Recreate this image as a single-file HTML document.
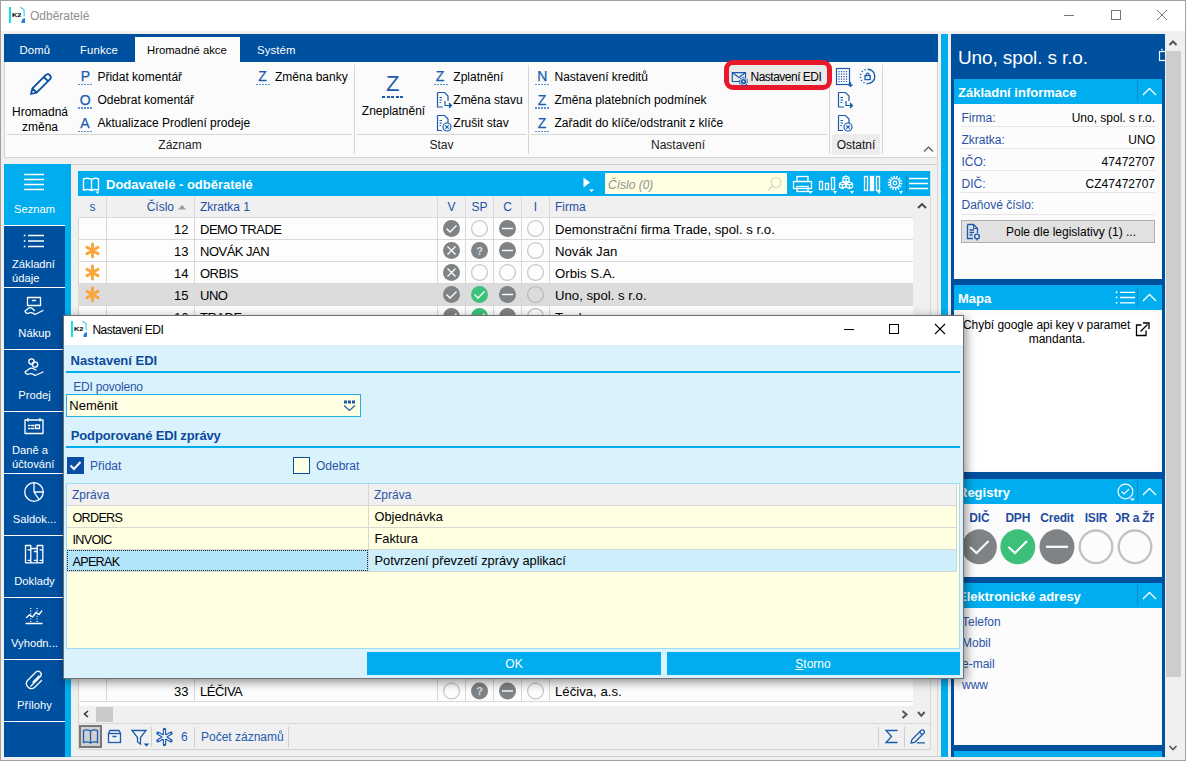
<!DOCTYPE html>
<html><head><meta charset="utf-8">
<style>
*{box-sizing:border-box;margin:0;padding:0}
html,body{width:1186px;height:761px;overflow:hidden}
body{position:relative;background:#f0f0f0;font-family:"Liberation Sans",sans-serif;font-size:12px;color:#000}
.a{position:absolute}
.t{position:absolute;white-space:nowrap;line-height:1}
.db{background:#0050a0}
.cy{background:#00aeef}
</style></head><body>
<!-- window frame -->
<div class="a" style="left:0;top:0;width:1186px;height:761px;border:1px solid #a0a0a0;z-index:50;pointer-events:none"></div>
<!-- title bar -->
<div class="a" style="left:1px;top:1px;width:1184px;height:30px;background:#fff"></div>
<!-- K2 logo -->
<svg class="a" style="left:0;top:0" width="120" height="31">
 <g transform="translate(0,0)">
 <rect x="9" y="7" width="2" height="16" fill="#0fe0f0"/>
 <text x="12" y="17" font-family="Liberation Sans" font-weight="bold" font-size="5.8" fill="#000" textLength="9.5" lengthAdjust="spacingAndGlyphs">K2</text>
 <path d="M20.3,7.3 L24,9.5 L24.2,16.5" stroke="#3cc8e8" stroke-width="1.1" fill="none"/>
 <path d="M21.5,23 L25,23 L25,18 Q22,18.5 21.5,21 Z" fill="#2a7ad8"/>
 </g>
</svg>
<div class="t" style="left:30px;top:9.5px;font-size:12px;color:#8f8f8f">Odběratelé</div>
<svg class="a" style="left:1050px;top:0" width="136" height="31">
 <path d="M14,15.5 H24" stroke="#777" stroke-width="1"/>
 <rect x="61.5" y="10.5" width="9" height="9" stroke="#777" stroke-width="1" fill="none"/>
 <path d="M107,10 L117,20 M117,10 L107,20" stroke="#777" stroke-width="1"/>
</svg>


<!-- ribbon tabs -->
<div class="a db" style="left:4px;top:34px;width:934px;height:28px"></div>
<div class="a" style="left:4px;top:62px;width:934px;height:96px;background:#fbfbfb;border:1px solid #d4d4d4;border-top:none"></div>

<div class="a" style="left:135px;top:37px;width:105px;height:25px;background:#fbfbfb"></div>
<div class="t" style="left:19.5px;top:44.7px;font-size:11.3px;color:#fff;letter-spacing:0.15px">Domů</div>
<div class="t" style="left:80px;top:44.7px;font-size:11.3px;color:#fff;letter-spacing:0.15px">Funkce</div>
<div class="t" style="left:257px;top:44.7px;font-size:11.3px;color:#fff;letter-spacing:0.15px">Systém</div>
<div class="t" style="left:147px;top:44.7px;font-size:11.3px;color:#000;letter-spacing:0px">Hromadné akce</div>
<svg class="a" style="left:0;top:62px" width="938" height="96">
<g transform="translate(0,-62)" fill="none" stroke="#0a4ea3" stroke-width="1.8" stroke-linejoin="round">
 <path d="M31,94 L32.4,88.4 L45.9,74.9 A3,3 0 0 1 50.1,79.1 L36.6,92.6 Z M32.4,88.4 L36.6,92.6 M43.8,77 L48,81.2"/>
</g>
<g transform="translate(0,-62)">
 <line x1="7" y1="134.5" x2="352" y2="134.5" stroke="#d7d7d7"/>
 <line x1="357" y1="134.5" x2="526" y2="134.5" stroke="#d7d7d7"/>
 <line x1="531" y1="134.5" x2="827" y2="134.5" stroke="#d7d7d7"/>
 <line x1="354.5" y1="65" x2="354.5" y2="154" stroke="#d7d7d7"/>
 <line x1="528.5" y1="65" x2="528.5" y2="154" stroke="#d7d7d7"/>
 <line x1="829.5" y1="65" x2="829.5" y2="154" stroke="#d7d7d7"/>
 <line x1="882.5" y1="65" x2="882.5" y2="154" stroke="#d7d7d7"/>
 <rect x="832" y="134" width="48" height="21" fill="#ececec"/>
 <path d="M924,151.5 L928.5,147 L933,151.5" stroke="#555" stroke-width="1.1" fill="none"/>
</g>
</svg>
<div class="t" style="left:-60.0px;top:105.74px;width:200px;text-align:center;font-size:12px;color:#000;">Hromadná</div>
<div class="t" style="left:-60.0px;top:121px;width:200px;text-align:center;font-size:12px;color:#000;">změna</div>
<div class="t" style="left:80.0px;top:138.64px;width:200px;text-align:center;font-size:12px;color:#222;">Záznam</div>
<div class="t" style="left:341.5px;top:138.64px;width:200px;text-align:center;font-size:12px;color:#222;">Stav</div>
<div class="t" style="left:578.0px;top:138.64px;width:200px;text-align:center;font-size:12px;color:#222;">Nastavení</div>
<div class="t" style="left:756.0px;top:138.64px;width:200px;text-align:center;font-size:12px;color:#111;">Ostatní</div>
<div class="t" style="left:293.5px;top:105.44px;width:200px;text-align:center;font-size:12px;color:#000;">Zneplatnění</div>
<div class="t" style="left:386px;top:73px;font-size:22px;color:#1a5bb0">Z</div>
<div class="a" style="left:382px;top:96px;width:23px;height:2px;background:repeating-linear-gradient(90deg,#1a5bb0 0 3px,transparent 3px 4.6px)"></div>
<div class="t" style="left:80.7px;top:69.45px;font-size:14px;color:#1a5bb0;-webkit-text-stroke:0.25px #1a5bb0">P</div>
<div class="a" style="left:78px;top:84.0px;width:15px;height:1.4px;background:repeating-linear-gradient(90deg,#5b8fd2 0 2px,transparent 2px 3px)"></div>
<div class="t" style="left:97.4px;top:71.1px;font-size:12px;color:#000;">Přidat komentář</div>
<div class="t" style="left:79.7px;top:92.75px;font-size:14px;color:#1a5bb0;-webkit-text-stroke:0.25px #1a5bb0">O</div>
<div class="a" style="left:78px;top:107.3px;width:15px;height:1.4px;background:repeating-linear-gradient(90deg,#5b8fd2 0 2px,transparent 2px 3px)"></div>
<div class="t" style="left:97.4px;top:94.2px;font-size:12px;color:#000;">Odebrat komentář</div>
<div class="t" style="left:80.2px;top:115.95px;font-size:14px;color:#1a5bb0;-webkit-text-stroke:0.25px #1a5bb0">A</div>
<div class="a" style="left:78px;top:130.5px;width:15px;height:1.4px;background:repeating-linear-gradient(90deg,#5b8fd2 0 2px,transparent 2px 3px)"></div>
<div class="t" style="left:97.4px;top:117.4px;font-size:12px;color:#000;">Aktualizace Prodlení prodeje</div>
<div class="t" style="left:258.2px;top:69.45px;font-size:14px;color:#1a5bb0;-webkit-text-stroke:0.25px #1a5bb0">Z</div>
<div class="a" style="left:256px;top:84.0px;width:15px;height:1.4px;background:repeating-linear-gradient(90deg,#5b8fd2 0 2px,transparent 2px 3px)"></div>
<div class="t" style="left:275px;top:71.1px;font-size:12px;color:#000;">Změna banky</div>
<div class="t" style="left:435.7px;top:69.45px;font-size:14px;color:#1a5bb0;-webkit-text-stroke:0.25px #1a5bb0">Z</div>
<div class="a" style="left:434px;top:84.0px;width:15px;height:1.4px;background:repeating-linear-gradient(90deg,#5b8fd2 0 2px,transparent 2px 3px)"></div>
<div class="t" style="left:453.3px;top:71.1px;font-size:12px;color:#000;">Zplatnění</div>
<div class="t" style="left:453.3px;top:94.2px;font-size:12px;color:#000;">Změna stavu</div>
<div class="t" style="left:453.3px;top:117.4px;font-size:12px;color:#000;">Zrušit stav</div>
<div class="t" style="left:537.2px;top:69.45px;font-size:14px;color:#1a5bb0;-webkit-text-stroke:0.25px #1a5bb0">N</div>
<div class="a" style="left:535px;top:84.0px;width:15px;height:1.4px;background:repeating-linear-gradient(90deg,#5b8fd2 0 2px,transparent 2px 3px)"></div>
<div class="t" style="left:554.5px;top:71.1px;font-size:12px;color:#000;">Nastavení kreditů</div>
<div class="t" style="left:537.7px;top:92.75px;font-size:14px;color:#1a5bb0;-webkit-text-stroke:0.25px #1a5bb0">Z</div>
<div class="a" style="left:535px;top:107.3px;width:15px;height:1.4px;background:repeating-linear-gradient(90deg,#5b8fd2 0 2px,transparent 2px 3px)"></div>
<div class="t" style="left:554.5px;top:94.2px;font-size:12px;color:#000;">Změna platebních podmínek</div>
<div class="t" style="left:537.7px;top:115.95px;font-size:14px;color:#1a5bb0;-webkit-text-stroke:0.25px #1a5bb0">Z</div>
<div class="a" style="left:535px;top:130.5px;width:15px;height:1.4px;background:repeating-linear-gradient(90deg,#5b8fd2 0 2px,transparent 2px 3px)"></div>
<div class="t" style="left:554.5px;top:117.4px;font-size:12px;color:#000;">Zařadit do klíče/odstranit z klíče</div>
<div class="a" style="left:729px;top:65px;width:98px;height:20px;background:#e9e9e9"></div>
<div class="t" style="left:750.5px;top:70.9px;font-size:12px;color:#000;letter-spacing:-0.5px">Nastavení EDI</div>
<div class="a" style="left:724px;top:60px;width:108px;height:30px;border:5px solid #e8192a;border-radius:9px"></div>
<svg class="a" style="left:0;top:0" width="938" height="160">
<g fill="none" stroke="#1a5bb0" stroke-width="1.2">
 <!-- doc arrow (Zmena stavu) -->
 <path d="M437.5,92.5 H444.5 L448,96 V101 M437.5,92.5 V107 H443"/>
 <path d="M439.5,97.5 H442 M439.5,100 H442 M439.5,102.5 H441"/>
 <path d="M445,101 V105.5 H450"/><path d="M449,103 L451.5,105.5 L449,108" fill="#1a5bb0"/>
 <!-- doc X (Zrusit stav) -->
 <path d="M437.5,115.5 H444.5 L448,119 V123 M437.5,115.5 V130.5 H442"/>
 <path d="M439.5,120.5 H442 M439.5,123 H442 M439.5,125.5 H441"/>
 <circle cx="447" cy="127" r="4"/><path d="M445.3,125.3 L448.7,128.7 M448.7,125.3 L445.3,128.7"/>
 <!-- envelope -->
 <path d="M740,81.5 H732.3 V72.6 H745.5 V77.5"/><path d="M732.3,72.6 L738.9,77.4 L745.5,72.6"/>
 <!-- building -->
 <rect x="836.5" y="68.5" width="13" height="16"/>
 <path d="M839,71 V82 M841.5,71 V82 M844,71 V82 M846.5,71 V82" stroke-dasharray="1.2 1.3"/>
 <path d="M850.5,82 V86 M848.5,84.5 L850.5,86.5 L852.5,84.5" />
 <!-- lock circle -->
 <path d="M867.6,69.2 A7.2,7.2 0 1 1 867.6,83.6" stroke-width="1.4"/>
 <path d="M867.6,83.6 A7.2,7.2 0 0 1 867.6,69.2" stroke-width="1.5" stroke-dasharray="1.2 2"/>
 <rect x="865" y="75.6" width="5.2" height="4" stroke-width="1.3"/><path d="M866.2,75.6 V74.6 A1.4,1.4 0 0 1 869,74.6 V75.6" stroke-width="1.2"/>
 <!-- doc arrow 2 -->
 <path d="M838.5,92.5 H845.5 L849,96 V101 M838.5,92.5 V107 H844"/>
 <path d="M840.5,97.5 H843 M840.5,100 H843 M840.5,102.5 H842"/>
 <path d="M846,101 V105.5 H851"/><path d="M850,103 L852.5,105.5 L850,108" fill="#1a5bb0"/>
 <!-- doc x 2 -->
 <path d="M838.5,115.5 H845.5 L849,119 V123 M838.5,115.5 V130.5 H843"/>
 <path d="M840.5,120.5 H843 M840.5,123 H843 M840.5,125.5 H842"/>
 <circle cx="848" cy="127" r="4"/><path d="M846.3,125.3 L849.7,128.7 M849.7,125.3 L846.3,128.7"/>
</g>
<circle cx="743.5" cy="81.5" r="3.9" fill="none" stroke="#1a5bb0" stroke-width="1.6" stroke-dasharray="1.3 1.1"/><circle cx="743.5" cy="81.5" r="2.6" fill="#1a5bb0"/><circle cx="743.5" cy="81.5" r="1" fill="#e9e9e9"/>
</svg>

<!-- sidebar -->
<div class="a cy" style="left:4px;top:164px;width:67px;height:593px"></div>
<div class="a db" style="left:4px;top:226px;width:61px;height:531px"></div>

<svg class="a" style="left:0;top:160px" width="72" height="600"><g transform="translate(0,-160)"><line x1="4" y1="225.5" x2="65" y2="225.5" stroke="#fff" stroke-width="1.2"/><line x1="4" y1="287.5" x2="65" y2="287.5" stroke="#fff" stroke-width="1.2"/><line x1="4" y1="349.5" x2="65" y2="349.5" stroke="#fff" stroke-width="1.2"/><line x1="4" y1="411.5" x2="65" y2="411.5" stroke="#fff" stroke-width="1.2"/><line x1="4" y1="473.5" x2="65" y2="473.5" stroke="#fff" stroke-width="1.2"/><line x1="4" y1="535.5" x2="65" y2="535.5" stroke="#fff" stroke-width="1.2"/><line x1="4" y1="597.5" x2="65" y2="597.5" stroke="#fff" stroke-width="1.2"/><line x1="4" y1="659.5" x2="65" y2="659.5" stroke="#fff" stroke-width="1.2"/><line x1="4" y1="721.5" x2="65" y2="721.5" stroke="#fff" stroke-width="1.2"/><g fill="none" stroke="#fff" stroke-width="1.3"><path d="M24,174.5 H44 M24,179.5 H44 M24,184.5 H44 M24,189.5 H44"/><path d="M28,235.5 H44 M28,241 H44 M28,246.5 H44"/></g><g fill="#fff"><rect x="23.8" y="234.7" width="1.6" height="1.6"/><rect x="23.8" y="240.2" width="1.6" height="1.6"/><rect x="23.8" y="245.7" width="1.6" height="1.6"/></g><g fill="none" stroke="#fff" stroke-width="1.3" stroke-linejoin="round" stroke-linecap="round"><rect x="27.5" y="297.5" width="13" height="8"/><path d="M32.5,300.5 H35.5"/><path d="M34.5,310.5 Q31,306.5 29,308 L25,311 Q26,314.5 29,313 Q32,312 35,314.5 L43,310.5"/><circle cx="31.5" cy="361.5" r="2.7"/><circle cx="35" cy="364.5" r="2.7"/><path d="M36,370 Q31,367 29,369 L25,372 Q26,375 29,374 Q32,373 35,375.5 L43,372"/><rect x="25" y="420" width="18" height="13.5"/><path d="M28,418.5 V421 M40,418.5 V421 M28.5,425.5 H29.5 M28.5,428.5 H29.5 M31,425.5 H34 M31,428.5 H34"/><rect x="35.5" y="425" width="4" height="3.5"/><circle cx="34" cy="492" r="9.3"/><path d="M34,482.7 V492 H43.3 M34,492 L39,499.5"/><path d="M25.5,545.5 H30.8 V548.5 H37.2 V545.5 H42.8 V562.8 H25.5 Z M30.8,548.5 V562.8 M37.2,548.5 V562.8 M28,549.8 H30.8 M28,560.3 H30.8 M34.4,551.5 H37.2 M34.4,560.3 H37.2 M40,549.8 H42.8 M40,560.3 H42.8"/><path d="M26,623.5 H42"/><path d="M26.5,617.5 L29.5,614.8 L32.5,617 L36,612.5 L39,614.5 L41.8,611"/><path d="M30.7,608 V622 M37.1,608 V622" stroke-dasharray="1 1.6" stroke-width="1.2" stroke-linecap="butt"/><path d="M31,686 L40.5,676.5 A3.2,3.2 0 0 0 36,672 L27.5,680.5 A5,5 0 0 0 34.5,687.5 L41.5,680.5 M33,682 L39,676"/></g></g></svg>
<div class="t" style="left:-5.5px;top:204.02px;width:80px;text-align:center;font-size:11.2px;color:#fff;">Seznam</div>
<div class="t" style="left:12px;top:259.32px;font-size:11.2px;color:#fff;">Základní</div>
<div class="t" style="left:12px;top:272.72px;font-size:11.2px;color:#fff;">údaje</div>
<div class="t" style="left:-5.5px;top:327.92px;width:80px;text-align:center;font-size:11.2px;color:#fff;">Nákup</div>
<div class="t" style="left:-5.5px;top:389.92px;width:80px;text-align:center;font-size:11.2px;color:#fff;">Prodej</div>
<div class="t" style="left:12px;top:445.32px;font-size:11.2px;color:#fff;">Daně a</div>
<div class="t" style="left:12px;top:458.72px;font-size:11.2px;color:#fff;">účtování</div>
<div class="t" style="left:-5.5px;top:514.22px;width:80px;text-align:center;font-size:11.2px;color:#fff;">Saldok...</div>
<div class="t" style="left:-5.5px;top:576.02px;width:80px;text-align:center;font-size:11.2px;color:#fff;">Doklady</div>
<div class="t" style="left:-5.5px;top:637.82px;width:80px;text-align:center;font-size:11.2px;color:#fff;">Vyhodn...</div>
<div class="t" style="left:-5.5px;top:699.82px;width:80px;text-align:center;font-size:11.2px;color:#fff;">Přílohy</div>

<div class="a" style="left:71px;top:164px;width:867px;height:1px;background:#cbcbcb"></div>
<!-- grid -->
<div class="a" style="left:78px;top:171px;width:853px;height:579px;background:#fdfdfd;border:1px solid #d4d4d4"></div>
<div class="a cy" style="left:78px;top:171px;width:853px;height:25px"></div>

<div class="a" style="left:78px;top:196px;width:835px;height:22px;background:#f0f0f0"></div>
<div class="a" style="left:913px;top:196px;width:18px;height:510px;background:#f0f0f0"></div>
<div class="a" style="left:78px;top:284px;width:835px;height:22px;background:#dcdcdc"></div>
<svg class="a" style="left:0;top:0" width="940" height="760"><g stroke="#d9d9d9" stroke-width="1"><line x1="78" y1="217.5" x2="913" y2="217.5"/><line x1="78" y1="239.5" x2="913" y2="239.5"/><line x1="78" y1="261.5" x2="913" y2="261.5"/><line x1="78" y1="283.5" x2="913" y2="283.5"/><line x1="78" y1="305.5" x2="913" y2="305.5"/><line x1="78" y1="701.5" x2="913" y2="701.5"/><line x1="106.5" y1="196" x2="106.5" y2="320"/><line x1="106.5" y1="670" x2="106.5" y2="701"/><line x1="194.5" y1="196" x2="194.5" y2="320"/><line x1="194.5" y1="670" x2="194.5" y2="701"/><line x1="437.5" y1="196" x2="437.5" y2="320"/><line x1="437.5" y1="670" x2="437.5" y2="701"/><line x1="465.5" y1="196" x2="465.5" y2="320"/><line x1="465.5" y1="670" x2="465.5" y2="701"/><line x1="493.5" y1="196" x2="493.5" y2="320"/><line x1="493.5" y1="670" x2="493.5" y2="701"/><line x1="521.5" y1="196" x2="521.5" y2="320"/><line x1="521.5" y1="670" x2="521.5" y2="701"/><line x1="549.5" y1="196" x2="549.5" y2="320"/><line x1="549.5" y1="670" x2="549.5" y2="701"/><line x1="78" y1="723.5" x2="931" y2="723.5"/><line x1="78" y1="748.5" x2="931" y2="748.5"/><line x1="930.5" y1="171" x2="930.5" y2="749"/><line x1="937.5" y1="158" x2="937.5" y2="757"/></g><circle cx="451.5" cy="228.5" r="8.5" fill="#7f8385"/><path d="M446.5,228.5 L450.0,232.0 L456.5,225.5" stroke="#fff" stroke-width="1.3" fill="none"/><circle cx="479.5" cy="228.5" r="7.9" fill="none" stroke="#c8c8c8" stroke-width="1.3"/><circle cx="507.5" cy="228.5" r="8.5" fill="#7f8385"/><path d="M502.0,228.5 H513.0" stroke="#fff" stroke-width="1.4"/><circle cx="535.5" cy="228.5" r="7.9" fill="none" stroke="#c8c8c8" stroke-width="1.3"/><circle cx="451.5" cy="250.5" r="8.5" fill="#7f8385"/><path d="M447.5,246.5 L455.5,254.5 M455.5,246.5 L447.5,254.5" stroke="#fff" stroke-width="1.2" fill="none"/><circle cx="479.5" cy="250.5" r="8.5" fill="#7f8385"/><text x="479.5" y="254.5" text-anchor="middle" font-family="Liberation Sans" font-weight="bold" font-size="11" fill="#ddd">?</text><circle cx="507.5" cy="250.5" r="8.5" fill="#7f8385"/><path d="M502.0,250.5 H513.0" stroke="#fff" stroke-width="1.4"/><circle cx="535.5" cy="250.5" r="7.9" fill="none" stroke="#c8c8c8" stroke-width="1.3"/><circle cx="451.5" cy="272.5" r="8.5" fill="#7f8385"/><path d="M447.5,268.5 L455.5,276.5 M455.5,268.5 L447.5,276.5" stroke="#fff" stroke-width="1.2" fill="none"/><circle cx="479.5" cy="272.5" r="7.9" fill="none" stroke="#c8c8c8" stroke-width="1.3"/><circle cx="507.5" cy="272.5" r="7.9" fill="none" stroke="#c8c8c8" stroke-width="1.3"/><circle cx="535.5" cy="272.5" r="7.9" fill="none" stroke="#c8c8c8" stroke-width="1.3"/><circle cx="451.5" cy="294.5" r="8.5" fill="#7f8385"/><path d="M446.5,294.5 L450.0,298.0 L456.5,291.5" stroke="#fff" stroke-width="1.3" fill="none"/><circle cx="479.5" cy="294.5" r="8.5" fill="#3dc17a"/><path d="M474.5,294.5 L478.0,298.0 L484.5,291.5" stroke="#fff" stroke-width="1.3" fill="none"/><circle cx="507.5" cy="294.5" r="8.5" fill="#7f8385"/><path d="M502.0,294.5 H513.0" stroke="#fff" stroke-width="1.4"/><circle cx="535.5" cy="294.5" r="7.9" fill="none" stroke="#b9b9b9" stroke-width="1.3"/><circle cx="451.5" cy="316.5" r="8.5" fill="#7f8385"/><path d="M446.5,316.5 L450.0,320.0 L456.5,313.5" stroke="#fff" stroke-width="1.3" fill="none"/><circle cx="479.5" cy="316.5" r="8.5" fill="#3dc17a"/><path d="M474.5,316.5 L478.0,320.0 L484.5,313.5" stroke="#fff" stroke-width="1.3" fill="none"/><circle cx="507.5" cy="316.5" r="8.5" fill="#7f8385"/><circle cx="535.5" cy="316.5" r="7.9" fill="none" stroke="#b9b9b9" stroke-width="1.3"/><circle cx="451.5" cy="691" r="7.9" fill="none" stroke="#c8c8c8" stroke-width="1.3"/><circle cx="479.5" cy="691" r="8.5" fill="#7f8385"/><text x="479.5" y="695" text-anchor="middle" font-family="Liberation Sans" font-weight="bold" font-size="11" fill="#ddd">?</text><circle cx="507.5" cy="691" r="8.5" fill="#7f8385"/><path d="M502.0,691 H513.0" stroke="#fff" stroke-width="1.4"/><circle cx="535.5" cy="691" r="7.9" fill="none" stroke="#c8c8c8" stroke-width="1.3"/><g stroke="#f9a53a" stroke-width="2.9" stroke-linecap="round"><path d="M92.5,244.0 V257.0 M86.9,247.3 L98.1,253.7 M98.1,247.3 L86.9,253.7"/></g><g stroke="#f9a53a" stroke-width="2.9" stroke-linecap="round"><path d="M92.5,266.0 V279.0 M86.9,269.3 L98.1,275.7 M98.1,269.3 L86.9,275.7"/></g><g stroke="#f9a53a" stroke-width="2.9" stroke-linecap="round"><path d="M92.5,288.0 V301.0 M86.9,291.3 L98.1,297.7 M98.1,291.3 L86.9,297.7"/></g><path d="M178,209.5 L182,205 L186,209.5 Z" fill="#9a9a9a"/></svg>
<div class="t" style="left:-7.5px;top:200.74px;width:200px;text-align:center;font-size:12px;color:#1f50a5;">s</div>
<div class="t" style="left:74px;top:200.74px;width:100px;text-align:right;font-size:12px;color:#1f50a5;">Číslo</div>
<div class="t" style="left:200px;top:200.74px;font-size:12px;color:#1f50a5;">Zkratka 1</div>
<div class="t" style="left:351.5px;top:200.74px;width:200px;text-align:center;font-size:12px;color:#1f50a5;">V</div>
<div class="t" style="left:379.5px;top:200.74px;width:200px;text-align:center;font-size:12px;color:#1f50a5;">SP</div>
<div class="t" style="left:407.5px;top:200.74px;width:200px;text-align:center;font-size:12px;color:#1f50a5;">C</div>
<div class="t" style="left:435.5px;top:200.74px;width:200px;text-align:center;font-size:12px;color:#1f50a5;">I</div>
<div class="t" style="left:555px;top:200.74px;font-size:12px;color:#1f50a5;">Firma</div>
<div class="t" style="left:915.5px;top:199.5px;font-size:12px;color:#333"><svg width="12" height="10"><path d="M2,8 L6,4 L10,8" stroke="#444" stroke-width="1.8" fill="none"/></svg></div>
<div class="t" style="left:88.5px;top:223.20px;width:100px;text-align:right;font-size:13px;color:#000;">12</div>
<div class="t" style="left:200px;top:223.20px;font-size:13px;color:#000;letter-spacing:-0.5px">DEMO TRADE</div>
<div class="t" style="left:555px;top:223.03px;font-size:13.2px;color:#000;">Demonstrační firma Trade, spol. s r.o.</div>
<div class="t" style="left:88.5px;top:245.20px;width:100px;text-align:right;font-size:13px;color:#000;">13</div>
<div class="t" style="left:200px;top:245.20px;font-size:13px;color:#000;letter-spacing:-0.5px">NOVÁK JAN</div>
<div class="t" style="left:555px;top:245.03px;font-size:13.2px;color:#000;">Novák Jan</div>
<div class="t" style="left:88.5px;top:267.20px;width:100px;text-align:right;font-size:13px;color:#000;">14</div>
<div class="t" style="left:200px;top:267.20px;font-size:13px;color:#000;letter-spacing:-0.5px">ORBIS</div>
<div class="t" style="left:555px;top:267.03px;font-size:13.2px;color:#000;">Orbis S.A.</div>
<div class="t" style="left:88.5px;top:289.20px;width:100px;text-align:right;font-size:13px;color:#000;">15</div>
<div class="t" style="left:200px;top:289.20px;font-size:13px;color:#000;letter-spacing:-0.5px">UNO</div>
<div class="t" style="left:555px;top:289.03px;font-size:13.2px;color:#000;">Uno, spol. s r.o.</div>
<div class="t" style="left:88.5px;top:311.20px;width:100px;text-align:right;font-size:13px;color:#000;">16</div>
<div class="t" style="left:200px;top:311.20px;font-size:13px;color:#000;letter-spacing:-0.5px">TRADE</div>
<div class="t" style="left:555px;top:311.03px;font-size:13.2px;color:#000;">Trade</div>
<div class="t" style="left:88.5px;top:684.90px;width:100px;text-align:right;font-size:13px;color:#000;">33</div>
<div class="t" style="left:200px;top:684.90px;font-size:13px;color:#000;letter-spacing:-0.5px">LÉČIVA</div>
<div class="t" style="left:555px;top:684.73px;font-size:13.2px;color:#000;">Léčiva, a.s.</div>
<svg class="a" style="left:78px;top:171px" width="853" height="25"><g fill="none" stroke="#fff" stroke-width="1.4"><path d="M5.5,7.8 Q9.5,6.6 13.5,8.3 Q17.5,6.6 20.5,7.8 V19 Q17,17.8 13.5,19.5 Q10,17.8 5.5,19 Z M13.5,8.3 V19.5"/></g><path d="M17.5,20.5 L21.5,20.5 L19.5,23 Z" fill="#fff"/><path d="M505.5,6.5 L512,11.5 L505.5,16.5 Z" fill="#fff"/><path d="M511,18.5 L516,18.5 L513.5,21 Z" fill="#fff"/></svg>
<div class="t" style="left:106px;top:177.80px;font-size:13px;color:#fff;font-weight:bold">Dodavatelé - odběratelé</div>
<div class="a" style="left:605px;top:173px;width:182px;height:21px;background:#ffffe3"></div>
<div class="t" style="left:608px;top:179px;font-size:12px;color:#8f8f8f;font-style:italic">Číslo (0)</div>
<svg class="a" style="left:765px;top:175px" width="20" height="18"><circle cx="11" cy="7.5" r="5" fill="none" stroke="#d9d9c0" stroke-width="1.2"/><path d="M7.5,11 L3,15.5" stroke="#d9d9c0" stroke-width="1.4"/></svg>
<svg class="a" style="left:788px;top:171px" width="143" height="25"><g fill="none" stroke="#fff" stroke-width="1.3">
<rect x="9" y="5.5" width="11" height="5"/><rect x="5.5" y="10.5" width="18" height="7"/><rect x="9" y="15.5" width="11" height="5"/>
<rect x="31.5" y="10.5" width="3" height="8"/><rect x="37.5" y="12.5" width="3" height="6"/><rect x="43.5" y="6.5" width="3" height="12"/>
<path d="M58,5 L61,6.5 V10 L58,11.5 L55,10 V6.5 Z M55,6.5 L58,8 L61,6.5 M58,8 V11.5"/><path d="M54.5,11 L57.5,12.5 V16 L54.5,17.5 L51.5,16 V12.5 Z M51.5,12.5 L54.5,14 L57.5,12.5 M54.5,14 V17.5"/><path d="M61.5,11 L64.5,12.5 V16 L61.5,17.5 L58.5,16 V12.5 Z M58.5,12.5 L61.5,14 L64.5,12.5 M61.5,14 V17.5"/>
<rect x="76.5" y="5.5" width="3" height="14"/><rect x="82.5" y="5.5" width="3" height="14" fill="#fff"/><rect x="88.5" y="5.5" width="3" height="14"/>
<circle cx="107" cy="12" r="6.2" stroke-width="2.2" stroke-dasharray="1.4 1.3"/><circle cx="107" cy="12" r="4.6"/><circle cx="107" cy="12" r="1.8"/>
<path d="M121,7.5 H140 M121,12.5 H140 M121,17.5 H140"/>
</g>
<g fill="#fff"><path d="M20,20 L25,20 L22.5,23 Z"/><path d="M45,20 L49,20 L47,23 Z"/><path d="M62,20 L66,20 L64,23 Z"/><path d="M89,20 L93,20 L91,23 Z"/><path d="M111,20 L115,20 L113,23 Z"/></g>
<path d="M118.5,3 V22" stroke="#0a8ec6" stroke-width="1"/>
</svg>
<div class="a" style="left:79px;top:706px;width:851px;height:17px;background:#f0f0f0"></div>
<div class="a" style="left:96px;top:707px;width:17px;height:15px;background:#cacaca"></div>
<div class="a" style="left:79px;top:724px;width:851px;height:25px;background:#f0f0f0"></div>
<div class="a" style="left:71px;top:756px;width:870px;height:1px;background:#cfcfcf"></div>
<div class="a" style="left:79px;top:725px;width:23px;height:23px;background:#d0d0d0;border:2px solid #777"></div>
<svg class="a" style="left:0;top:700px" width="940" height="60"><g fill="none" stroke="#1a5bb0" stroke-width="1.3">
<path d="M83.5,30.5 Q87,29 90.5,31 Q94,29 97.5,30.5 V42.5 Q94,41 90.5,43 Q87,41 83.5,42.5 Z M90.5,31 V43"/>
<rect x="108.5" y="33.5" width="12" height="9"/><path d="M108.5,33.5 L110,30.5 H119 L120.5,33.5 M112.5,36.5 H116.5"/>
<path d="M132,30.5 H146 L140.5,37.5 V44 L137.5,42 V37.5 Z"/>
<path d="M164.5,29.5 V44.5 M158,33.25 L171,40.75 M171,33.25 L158,40.75" stroke-width="3.4" stroke-linecap="round"/><path d="M164.5,30 V44 M158.5,33.5 L170.5,40.5 M170.5,33.5 L158.5,40.5" stroke="#f0f0f0" stroke-width="1.1"/><circle cx="164.5" cy="37" r="2.2" fill="#f0f0f0" stroke="none"/>
<path d="M897.5,30.5 H886 L891.5,36.5 L886,42.5 H897.5" />
<path d="M911,43 L912,39.5 L921,30.5 A1.6,1.6 0 0 1 923.8,33.3 L914.8,42.3 Z M919.5,32 L922.3,34.8 M917,42.8 H925"/>
</g>
<path d="M143.5,43.5 H149.5 L146.5,46.5 Z" fill="#1a5bb0"/>
<g stroke="#cfcfcf"><line x1="151.5" y1="27" x2="151.5" y2="47"/><line x1="194.5" y1="27" x2="194.5" y2="47"/><line x1="288.5" y1="27" x2="288.5" y2="47"/><line x1="878.5" y1="27" x2="878.5" y2="47"/><line x1="904.5" y1="27" x2="904.5" y2="47"/></g>
<path d="M88,11 L84.5,14 L88,17" stroke="#333" stroke-width="1.6" fill="none"/>
<path d="M902.5,11 L906.5,14.5 L902.5,18" stroke="#555" stroke-width="2" fill="none"/>
<path d="M918,12 L921.3,15.8 L924.6,12" stroke="#555" stroke-width="2" fill="none"/>
</svg>
<div class="t" style="left:181px;top:730.84px;font-size:12px;color:#1a5bb0;">6</div>
<div class="t" style="left:201px;top:730.84px;font-size:12px;color:#1a5bb0;">Počet záznamů</div>

<!-- cyan strip right of grid -->
<div class="a cy" style="left:941px;top:34px;width:7px;height:723px"></div>

<!-- right panel -->
<div class="a db" style="left:951px;top:34px;width:214px;height:723px"></div>

<div class="t" style="left:958px;top:48.3px;font-size:19px;color:#fff;letter-spacing:-0.12px">Uno, spol. s r.o.</div>
<svg class="a" style="left:1155px;top:48px" width="10" height="16"><rect x="4.5" y="3.5" width="8" height="9" fill="none" stroke="#fff" stroke-width="1.2"/><path d="M6,1 L8,2" stroke="#fff"/></svg>
<div class="a cy" style="left:954px;top:79px;width:208px;height:25px"></div>
<svg class="a" style="left:954px;top:79px" width="208" height="25"><line x1="183.5" y1="2" x2="183.5" y2="23" stroke="#0a8fc8"/><path d="M189,16 L195.5,9.5 L202,16" stroke="#fff" stroke-width="1.3" fill="none"/></svg>
<div class="t" style="left:958px;top:86.40px;font-size:13px;color:#fff;font-weight:bold">Základní informace</div>
<div class="a" style="left:954px;top:104px;width:208px;height:175px;background:#fcfcfc"></div>
<div class="t" style="left:961.5px;top:112.14px;font-size:12px;color:#2a52a6;">Firma:</div>
<div class="t" style="left:1005px;top:112.14px;width:150px;text-align:right;font-size:12px;color:#000;">Uno, spol. s r.o.</div>
<div class="a" style="left:961px;top:125.5px;width:194px;height:1px;background:#e6e6e6"></div>
<div class="t" style="left:961.5px;top:133.94px;font-size:12px;color:#2a52a6;">Zkratka:</div>
<div class="t" style="left:1005px;top:133.94px;width:150px;text-align:right;font-size:12px;color:#000;">UNO</div>
<div class="a" style="left:961px;top:147.5px;width:194px;height:1px;background:#e6e6e6"></div>
<div class="t" style="left:961.5px;top:155.74px;font-size:12px;color:#2a52a6;">IČO:</div>
<div class="t" style="left:1005px;top:155.74px;width:150px;text-align:right;font-size:12px;color:#000;">47472707</div>
<div class="a" style="left:961px;top:169.5px;width:194px;height:1px;background:#e6e6e6"></div>
<div class="t" style="left:961.5px;top:177.54px;font-size:12px;color:#2a52a6;">DIČ:</div>
<div class="t" style="left:1005px;top:177.54px;width:150px;text-align:right;font-size:12px;color:#000;">CZ47472707</div>
<div class="a" style="left:961px;top:191.5px;width:194px;height:1px;background:#e6e6e6"></div>
<div class="t" style="left:961.5px;top:199.34px;font-size:12px;color:#2a52a6;">Daňové číslo:</div>
<div class="a" style="left:961px;top:213.5px;width:194px;height:1px;background:#e6e6e6"></div>
<div class="a" style="left:961px;top:220px;width:194px;height:23px;background:#e1e1e1;border:1px solid #adadad"></div>
<svg class="a" style="left:963px;top:222px" width="20" height="20"><g fill="none" stroke="#1a5bb0" stroke-width="1.3"><path d="M4.5,2.5 H10.5 L14.5,6.5 V11 M4.5,2.5 V16.5 H10"/><path d="M10.5,2.5 V6.5 H14.5" stroke-width="1"/><path d="M6.5,8 H11 M6.5,10.5 H11 M6.5,13 H9.5"/><circle cx="14" cy="14.5" r="2.4"/><path d="M14,16.9 V18.5"/></g></svg>
<div class="t" style="left:971.0px;top:225.84px;width:200px;text-align:center;font-size:12px;color:#000;">Pole dle legislativy (1) ...</div>
<div class="a cy" style="left:954px;top:285px;width:208px;height:25px"></div>
<svg class="a" style="left:954px;top:285px" width="208" height="25"><line x1="183.5" y1="2" x2="183.5" y2="23" stroke="#0a8fc8"/><path d="M189,16 L195.5,9.5 L202,16" stroke="#fff" stroke-width="1.3" fill="none"/></svg>
<div class="t" style="left:958px;top:292.40px;font-size:13px;color:#fff;font-weight:bold">Mapa</div>
<svg class="a" style="left:1114px;top:285px" width="24" height="25"><g fill="#fff"><rect x="1.8" y="6.5" width="1.6" height="1.6"/><rect x="1.8" y="11.7" width="1.6" height="1.6"/><rect x="1.8" y="17" width="1.6" height="1.6"/></g><path d="M6,7.3 H21 M6,12.5 H21 M6,17.8 H21" stroke="#fff" stroke-width="1.3"/></svg>
<div class="a" style="left:954px;top:310px;width:208px;height:162px;background:#fcfcfc"></div>
<div class="a" style="left:962px;top:314px;width:193px;height:155px;background:#fff"></div>
<div class="t" style="left:963px;top:318.74px;font-size:12px;color:#000;letter-spacing:-0.05px">Chybí google api key v paramet</div>
<div class="t" style="left:957.0px;top:333.34px;width:200px;text-align:center;font-size:12px;color:#000;">mandanta.</div>
<svg class="a" style="left:1134px;top:320px" width="18" height="18"><g fill="none" stroke="#000" stroke-width="1.3"><path d="M7.5,5 H2.5 V15.5 H12 V10.5"/><path d="M6.5,11.5 L13.5,4.5 M9,3 H15 V9"/></g></svg>
<div class="a cy" style="left:954px;top:479px;width:208px;height:25px"></div>
<svg class="a" style="left:954px;top:479px" width="208" height="25"><line x1="183.5" y1="2" x2="183.5" y2="23" stroke="#0a8fc8"/><path d="M189,16 L195.5,9.5 L202,16" stroke="#fff" stroke-width="1.3" fill="none"/></svg>
<div class="t" style="left:958px;top:486.40px;font-size:13px;color:#fff;font-weight:bold">Registry</div>
<svg class="a" style="left:1114px;top:479px" width="24" height="25"><circle cx="11.4" cy="12.5" r="7.4" fill="none" stroke="#fff" stroke-width="1.1"/><path d="M7.5,12.5 L10,15 L15,10" stroke="#fff" stroke-width="1.1" fill="none"/><path d="M16,19.5 H21 L18.5,22 Z" fill="#fff"/></svg>
<div class="a" style="left:954px;top:504px;width:208px;height:73px;background:#fcfcfc"></div>
<div class="a" style="left:954px;top:504px;width:208px;height:73px;overflow:hidden"><div style="position:absolute;left:6.2px;top:1.64px;width:38.4px;height:22px;overflow:hidden;display:flex;justify-content:center"><span style="margin-top:6px;white-space:nowrap;font-size:12px;line-height:1;font-weight:bold;color:#1f4aa0;letter-spacing:-0.2px;flex:none">DIČ</span></div><div style="position:absolute;left:44.6px;top:1.64px;width:38.4px;height:22px;overflow:hidden;display:flex;justify-content:center"><span style="margin-top:6px;white-space:nowrap;font-size:12px;line-height:1;font-weight:bold;color:#1f4aa0;letter-spacing:-0.2px;flex:none">DPH</span></div><div style="position:absolute;left:83.8px;top:1.64px;width:38.4px;height:22px;overflow:hidden;display:flex;justify-content:center"><span style="margin-top:6px;white-space:nowrap;font-size:12px;line-height:1;font-weight:bold;color:#1f4aa0;letter-spacing:-0.2px;flex:none">Credit</span></div><div style="position:absolute;left:122.8px;top:1.64px;width:38.4px;height:22px;overflow:hidden;display:flex;justify-content:center"><span style="margin-top:6px;white-space:nowrap;font-size:12px;line-height:1;font-weight:bold;color:#1f4aa0;letter-spacing:-0.2px;flex:none">ISIR</span></div><div style="position:absolute;left:161.8px;top:1.64px;width:38.4px;height:22px;overflow:hidden;display:flex;justify-content:center"><span style="margin-top:6px;white-space:nowrap;font-size:12px;line-height:1;font-weight:bold;color:#1f4aa0;letter-spacing:-0.2px;flex:none">OR a ŽR</span></div></div>
<svg class="a" style="left:954px;top:504px" width="208" height="73"><g transform="translate(-954,-504)"><circle cx="979.4" cy="546.8" r="17.5" fill="#7f8385"/><path d="M970,547 L976.5,553 L988.5,541" stroke="#fff" stroke-width="2" fill="none"/><circle cx="1017.8" cy="546.8" r="17.5" fill="#3dc17a"/><path d="M1008.5,547 L1015,553 L1027,541" stroke="#fff" stroke-width="2" fill="none"/><circle cx="1057" cy="546.8" r="17.5" fill="#7f8385"/><path d="M1046,546.8 H1068" stroke="#fff" stroke-width="2.2"/><circle cx="1096" cy="546.8" r="16.3" fill="none" stroke="#c2c2c2" stroke-width="2.4"/><circle cx="1135" cy="546.8" r="16.3" fill="none" stroke="#c2c2c2" stroke-width="2.4"/></g></svg>
<div class="a cy" style="left:954px;top:583px;width:208px;height:25px"></div>
<svg class="a" style="left:954px;top:583px" width="208" height="25"><line x1="183.5" y1="2" x2="183.5" y2="23" stroke="#0a8fc8"/><path d="M189,16 L195.5,9.5 L202,16" stroke="#fff" stroke-width="1.3" fill="none"/></svg>
<div class="t" style="left:958px;top:590.40px;font-size:13px;color:#fff;font-weight:bold">Elektronické adresy</div>
<div class="a" style="left:954px;top:608px;width:208px;height:137px;background:#fcfcfc"></div>
<div class="t" style="left:962px;top:616.34px;font-size:12px;color:#2a52a6;">Telefon</div>
<div class="t" style="left:962px;top:637.34px;font-size:12px;color:#2a52a6;">Mobil</div>
<div class="t" style="left:962px;top:658.34px;font-size:12px;color:#2a52a6;">e-mail</div>
<div class="t" style="left:962px;top:679.34px;font-size:12px;color:#2a52a6;">www</div>
<div class="a cy" style="left:954px;top:751px;width:208px;height:6px"></div>
<div class="a" style="left:1165px;top:34px;width:20px;height:723px;background:#f0f0f0"></div>
<div class="a" style="left:1166px;top:51px;width:15px;height:626px;background:#cdcdcd"></div>
<svg class="a" style="left:1165px;top:34px" width="20" height="723"><path d="M4.5,11 L8,7.5 L11.5,11" stroke="#555" stroke-width="2" fill="none"/><path d="M4.5,712 L8,715.5 L11.5,712" stroke="#555" stroke-width="1.6" fill="none"/></svg>


<!-- dialog -->
<div class="a" style="left:63px;top:315px;width:901px;height:364px;background:#daf2fc;border:1px solid #707070;box-shadow:2px 3px 10px rgba(0,0,0,.45)"></div>
<div class="a" style="left:64px;top:316px;width:899px;height:29px;background:#fff"></div>
<svg class="a" style="left:64px;top:316px" width="899" height="29">
 <g transform="translate(-2,-2)">
 <rect x="9" y="7" width="2" height="16" fill="#0fe0f0"/>
 <text x="12" y="17" font-family="Liberation Sans" font-weight="bold" font-size="5.8" fill="#000" textLength="9.5" lengthAdjust="spacingAndGlyphs">K2</text>
 <path d="M20.3,7.3 L24,9.5 L24.2,16.5" stroke="#3cc8e8" stroke-width="1.1" fill="none"/>
 <path d="M21.5,23 L25,23 L25,18 Q22,18.5 21.5,21 Z" fill="#2a7ad8"/>
 </g>
 <path d="M780,13.5 H790" stroke="#000" stroke-width="1"/>
 <rect x="825.5" y="8.5" width="9" height="9" stroke="#000" stroke-width="1" fill="none"/>
 <path d="M871,8 L881,18 M881,8 L871,18" stroke="#000" stroke-width="1.1"/>
</svg>
<div class="t" style="left:92.4px;top:323.84px;font-size:12px;color:#000;letter-spacing:-0.5px">Nastavení EDI</div>
<div class="t" style="left:70.5px;top:353.90px;font-size:13px;color:#0c4a9c;font-weight:bold">Nastavení EDI</div>
<div class="a cy" style="left:66px;top:371px;width:894px;height:2px"></div>
<div class="t" style="left:73.2px;top:380.54px;font-size:12px;color:#2a52a6;letter-spacing:-0.2px">EDI povoleno</div>
<div class="a" style="left:66px;top:394px;width:295px;height:23px;background:#ffffe3;border:1px solid #1fb0ea"></div>
<div class="t" style="left:69.3px;top:399.40px;font-size:13px;color:#000;">Neměnit</div>
<svg class="a" style="left:340px;top:396px" width="20" height="18"><g fill="none" stroke="#1a5bb0" stroke-width="1"><rect x="4.5" y="5" width="2" height="2"/><rect x="8.5" y="5" width="2" height="2"/><rect x="12.5" y="5" width="2" height="2"/><path d="M4,9.5 L9.5,14.5 L15,9.5" stroke-width="1.1"/></g></svg>
<div class="t" style="left:70.8px;top:428.50px;font-size:13px;color:#0c4a9c;font-weight:bold;letter-spacing:-0.15px">Podporované EDI zprávy</div>
<div class="a cy" style="left:66px;top:446px;width:894px;height:2px"></div>
<div class="a" style="left:67px;top:457px;width:17px;height:17px;background:#0a4ea3"></div>
<svg class="a" style="left:67px;top:457px" width="17" height="17"><path d="M3.5,8.5 L7,12 L13.5,5" stroke="#fff" stroke-width="2" fill="none"/></svg>
<div class="t" style="left:90px;top:459.74px;font-size:12px;color:#2a52a6;">Přidat</div>
<div class="a" style="left:293px;top:457px;width:17px;height:17px;background:#ffffe3;border:1.5px solid #0a4ea3"></div>
<div class="t" style="left:316px;top:459.74px;font-size:12px;color:#2a52a6;">Odebrat</div>
<div class="a" style="left:66px;top:483px;width:894px;height:166px;background:#ffffe1;border:1px solid #9fdcf6"></div>
<div class="a" style="left:67px;top:484px;width:890px;height:21px;background:#f0f0f0"></div>
<div class="a" style="left:67px;top:550px;width:890px;height:21px;background:#cdeefb"></div>
<div class="a" style="left:67px;top:550px;width:301px;height:21px;background:#b2e4fa;border:1px dotted #222"></div>
<svg class="a" style="left:66px;top:483px" width="894" height="166"><g stroke="#d6d6d6"><line x1="1" y1="22.5" x2="891" y2="22.5"/><line x1="1" y1="44.5" x2="891" y2="44.5"/><line x1="1" y1="66.5" x2="891" y2="66.5"/><line x1="1" y1="88.5" x2="891" y2="88.5"/><line x1="302.5" y1="1" x2="302.5" y2="88"/><line x1="890.5" y1="1" x2="890.5" y2="88"/></g></svg>
<div class="t" style="left:72px;top:488.64px;font-size:12px;color:#2a52a6;">Zpráva</div>
<div class="t" style="left:374px;top:488.64px;font-size:12px;color:#2a52a6;">Zpráva</div>
<div class="t" style="left:72.5px;top:511.53px;font-size:12.6px;color:#000;letter-spacing:-0.7px">ORDERS</div>
<div class="t" style="left:374.5px;top:511.30px;font-size:12.8px;color:#000;">Objednávka</div>
<div class="t" style="left:72.5px;top:533.53px;font-size:12.6px;color:#000;letter-spacing:-0.7px">INVOIC</div>
<div class="t" style="left:374.5px;top:533.30px;font-size:12.8px;color:#000;">Faktura</div>
<div class="t" style="left:72.5px;top:555.53px;font-size:12.6px;color:#000;letter-spacing:-0.7px">APERAK</div>
<div class="t" style="left:374.5px;top:555.30px;font-size:12.8px;color:#000;">Potvrzení převzetí zprávy aplikací</div>
<div class="a cy" style="left:367px;top:652px;width:294px;height:23px"></div>
<div class="a cy" style="left:667px;top:652px;width:293px;height:23px"></div>
<div class="t" style="left:414.0px;top:658.24px;width:200px;text-align:center;font-size:12px;color:#fff;">OK</div>
<div class="t" style="left:713.0px;top:658.24px;width:200px;text-align:center;font-size:12px;color:#fff;"><u>S</u>torno</div>

</body></html>
